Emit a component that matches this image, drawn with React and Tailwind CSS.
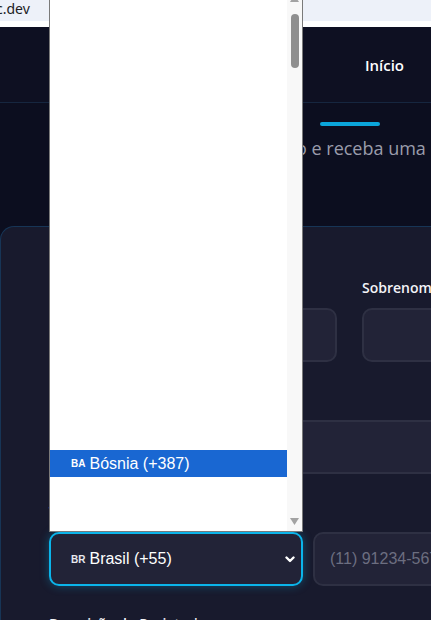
import React from 'react';

const hidden = [
  'Armênia (+374)', 'Aruba (+297)', 'Austrália (+61)', 'Áustria (+43)', 'Azerbaijão (+994)',
  'Bahamas (+1)', 'Bahrein (+973)', 'Bangladesh (+880)', 'Barbados (+1)', 'Bélgica (+32)',
  'Belize (+501)', 'Benin (+229)', 'Bermudas (+1)', 'Bielorrússia (+375)', 'Bolívia (+591)',
  'Bonaire (+599)',
];

function Label({ children }) {
  return (
    <div className="mb-[10px] whitespace-nowrap text-[14px] leading-[20px] font-semibold text-[#f3f3f7] font-['Open_Sans',sans-serif]">
      {children}
    </div>
  );
}

function Input({ className = '', children }) {
  return (
    <div className={`flex h-[54px] items-center rounded-[10px] border-2 border-[#2e3043] bg-[#222337] ${className}`}>
      {children}
    </div>
  );
}

export default function App() {
  return (
    <div className="relative flex h-[620px] w-[431px] flex-col overflow-hidden bg-[#0c0e1f]">
      {/* browser url strip */}
      <div className="h-[21px] shrink-0 bg-[#edf1f9] text-[14px] leading-[17px] text-[#202124] font-['Noto_Sans',sans-serif]">
        <span className="ml-[-4px]">c.dev</span>
      </div>
      <div className="h-[6px] shrink-0 bg-white" />

      {/* header */}
      <div className="flex h-[76px] shrink-0 items-center justify-end border-b border-[#16263f] bg-[#0e1022] pr-[27px] pt-[2px]">
        <span className="text-[15px] font-semibold text-white font-['Open_Sans',sans-serif]">Início</span>
      </div>

      {/* hero */}
      <div className="h-[123px] shrink-0">
        <div className="ml-[320px] mt-[19px] h-[4px] w-[60px] rounded-full bg-[#0ba5da]" />
        <div className="mt-[8px] whitespace-nowrap pl-[296px] text-[18px] leading-[28px] text-[#9a9cab] font-['Open_Sans',sans-serif]">
          o e receba uma proposta
        </div>
      </div>

      {/* form card */}
      <div className="w-[700px] shrink-0 rounded-tl-[14px] border-l border-t border-[#173556] bg-[#181a2d] pb-10 pl-[48px] pt-[51px]">
        <div className="grid grid-cols-[288px_288px] gap-x-[25px]">
          <div>
            <Label>Nome *</Label>
            <Input />
          </div>
          <div>
            <Label>Sobrenome *</Label>
            <Input />
          </div>
        </div>

        <div className="mt-[28px] w-[601px]">
          <Label>Email *</Label>
          <Input className="bg-[#24253a]" />
        </div>

        <div className="mt-[28px] w-[601px]">
          <Label>Telefone *</Label>
          <div className="flex gap-[10px]">
            <div className="flex h-[54px] w-[254px] items-center rounded-[10px] border-2 border-[#0bb4ea] bg-[#222337] pl-[20px] pr-[5px] shadow-[0_0_10px_rgba(11,180,234,0.35)] font-['Liberation_Sans',Arial,sans-serif]">
              <span className="mr-[4px] text-[10px] font-bold text-[#e8e8ee]">BR</span>
              <span className="text-[16px] text-white">Brasil (+55)</span>
              <svg className="ml-auto mr-[1px]" width="10" height="7" viewBox="0 0 10 7">
                <path d="M1.5 1.5 5 5l3.5-3.5" fill="none" stroke="white" strokeWidth="2.4" strokeLinecap="round" strokeLinejoin="round" />
              </svg>
            </div>
            <Input className="w-[337px] pl-[15px]">
              <span className="whitespace-nowrap text-[16px] text-[#6c6e80] font-['Liberation_Sans',Arial,sans-serif]">(11) 91234-5678</span>
            </Input>
          </div>
        </div>

        <div className="mt-[28px]">
          <Label>Descrição do Projeto *</Label>
        </div>
      </div>

      {/* native select popup */}
      <div className="absolute left-[49px] top-0 flex h-[532px] w-[254px] border-x border-b border-[#7a7a7a] bg-white font-['Liberation_Sans',Arial,sans-serif]">
        <div className="flex flex-1 flex-col overflow-hidden">
          <div className="flex h-[450px] shrink-0 flex-col justify-end overflow-hidden">
            {hidden.map((c) => (
              <div key={c} className="flex h-[27px] shrink-0 items-center pl-[21px] text-[16px] text-white">{c}</div>
            ))}
          </div>
          <div className="flex h-[27px] shrink-0 items-center bg-[#1967d2] pl-[21px] text-white">
            <span className="mr-[4px] text-[10px] font-bold">BA</span>
            <span className="text-[16px]">Bósnia (+387)</span>
          </div>
          <div className="flex h-[27px] shrink-0 items-center pl-[21px] text-[16px] text-white">Botsuana (+267)</div>
        </div>
        <div className="flex w-[15px] flex-col items-center bg-[#f8f8f8]">
          <svg className="mt-[-5px]" width="9" height="8" viewBox="0 0 9 8">
            <path d="M4.5 0 9 7H0z" fill="#a3a3a3" />
          </svg>
          <div className="mt-[11px] h-[54px] w-[8px] rounded-full bg-[#8f8f8f]" />
          <div className="flex-1" />
          <svg className="mb-[5px]" width="9" height="8" viewBox="0 0 9 8">
            <path d="M0 0h9L4.5 7z" fill="#a3a3a3" />
          </svg>
        </div>
      </div>
    </div>
  );
}
